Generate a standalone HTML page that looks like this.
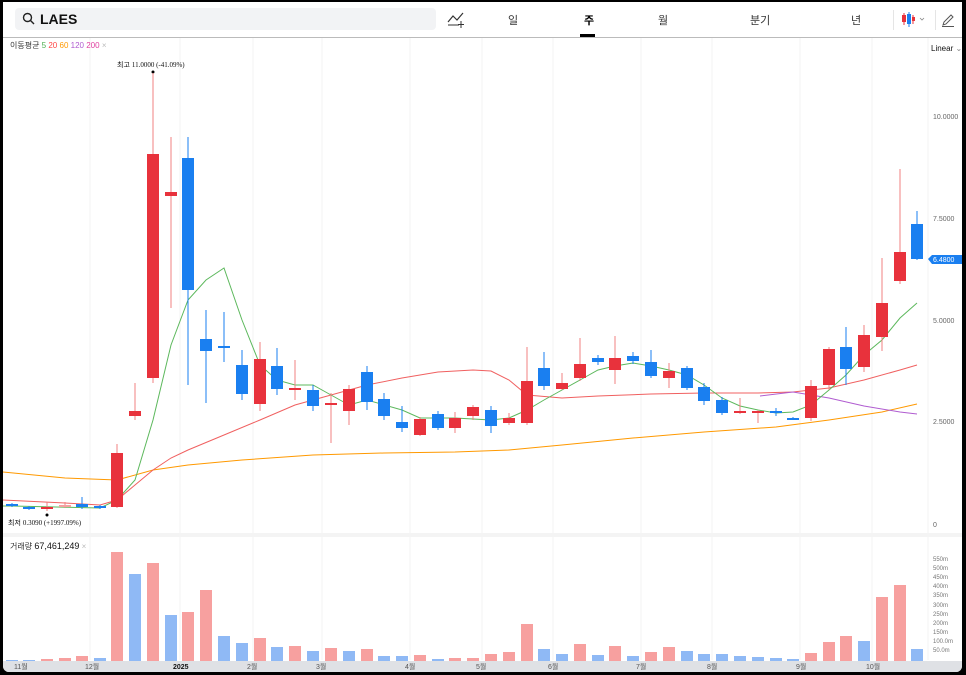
<!DOCTYPE html>
<html><head><meta charset="utf-8">
<style>
*{margin:0;padding:0;box-sizing:border-box}
html,body{width:966px;height:675px;background:#000;overflow:hidden;font-family:"Liberation Sans","Noto Sans CJK KR",sans-serif}
#w{position:absolute;left:3px;top:2px;width:959px;height:670px;background:#fff;border-radius:0 0 6px 6px;overflow:hidden}
#top{position:absolute;left:0;top:0;width:959px;height:36px;border-bottom:1px solid #bbb}
#search{position:absolute;left:12px;top:6px;width:421px;height:22px;background:#f2f3f5;border-radius:4px}
#search span{position:absolute;left:25px;top:3px;font-size:14px;font-weight:bold;color:#111}
.tab{position:absolute;top:10px;font-size:11px;color:#333}
svg{position:absolute;left:0;top:0}
.sm{font-size:7px;fill:#666}
</style></head><body><div id="w">
<div id="top">
<div id="search"><svg width="14" height="14" style="left:7px;top:4px"><circle cx="5.5" cy="5.5" r="4" fill="none" stroke="#222" stroke-width="1.4"/><line x1="8.5" y1="8.5" x2="12" y2="12" stroke="#222" stroke-width="1.4"/></svg><span>LAES</span></div>
<svg width="20" height="20" style="left:443px;top:8px"><polyline points="2,12 7,6 11,10 17,3" fill="none" stroke="#333" stroke-width="1.2"/><line x1="2" y1="15" x2="13" y2="15" stroke="#333"/><line x1="15" y1="11" x2="15" y2="18" stroke="#333"/><line x1="12" y1="14.5" x2="18" y2="14.5" stroke="#333"/></svg>
<div class="tab" style="left:505px">일</div>
<div class="tab" style="left:581px;font-weight:bold;color:#000">주</div>
<div style="position:absolute;left:577px;top:32px;width:15px;height:3px;background:#000"></div>
<div class="tab" style="left:655px">월</div>
<div class="tab" style="left:747px">분기</div>
<div class="tab" style="left:848px">년</div>
<div style="position:absolute;left:890px;top:8px;width:1px;height:20px;background:#e5e5e5"></div>
<div style="position:absolute;left:932px;top:8px;width:1px;height:20px;background:#e5e5e5"></div>
<svg width="30" height="20" style="left:897px;top:8px"><line x1="4" y1="3" x2="4" y2="15" stroke="#e8323c"/><rect x="2" y="5" width="4" height="7" fill="#e8323c"/><line x1="9" y1="2" x2="9" y2="17" stroke="#1a7ff0"/><rect x="7" y="4" width="4" height="10" fill="#1a7ff0"/><line x1="13" y1="5" x2="13" y2="14" stroke="#e8323c"/><rect x="12" y="7" width="3" height="4" fill="#e8323c"/><polyline points="20,8 22,10 24,8" fill="none" stroke="#888" stroke-width="0.8"/></svg>
<svg width="16" height="16" style="left:937px;top:10px"><path d="M3 13 L4 10 L11 3 L13 5 L6 12 Z" fill="none" stroke="#555" stroke-width="1"/><line x1="2" y1="14.5" x2="14" y2="14.5" stroke="#555"/></svg>
</div>
<svg width="959" height="670" viewBox="3 2 959 670" style="top:0;left:0">
<g stroke="#f3f3f3" stroke-width="1">
<line x1="90" y1="38" x2="90" y2="660"/><line x1="180" y1="38" x2="180" y2="660"/><line x1="253" y1="38" x2="253" y2="660"/><line x1="322" y1="38" x2="322" y2="660"/><line x1="410" y1="38" x2="410" y2="660"/><line x1="482" y1="38" x2="482" y2="660"/><line x1="553" y1="38" x2="553" y2="660"/><line x1="641" y1="38" x2="641" y2="660"/><line x1="712" y1="38" x2="712" y2="660"/><line x1="800" y1="38" x2="800" y2="660"/><line x1="872" y1="38" x2="872" y2="660"/><line x1="928" y1="38" x2="928" y2="660"/>
</g>
<rect x="3" y="533" width="959" height="4" fill="#f4f4f4"/>
<text x="10" y="48" font-size="8" fill="#333">이동평균 <tspan fill="#4caf50">5</tspan> <tspan fill="#f44">20</tspan> <tspan fill="#f90">60</tspan> <tspan fill="#b05cd0">120</tspan> <tspan fill="#e040a0">200</tspan> <tspan fill="#bbb">×</tspan></text>
<text x="931" y="51" font-size="8" fill="#111">Linear <tspan fill="#888">⌄</tspan></text>
<text x="933" y="119" class="sm">10.0000</text><text x="933" y="221" class="sm">7.5000</text><text x="933" y="323" class="sm">5.0000</text><text x="933" y="424" class="sm">2.5000</text><text x="933" y="527" class="sm">0</text>
<path d="M928 259 L932 255 L962 255 L962 264 L932 264 Z" fill="#1a7ff0"/><text x="933" y="262" font-size="7" fill="#fff">6.4800</text>
<text x="117" y="67" font-size="7" fill="#111">최고 <tspan font-family="Liberation Serif">11.0000 (-41.09%)</tspan></text><circle cx="153" cy="72" r="1.5" fill="#000"/>
<text x="8" y="525" font-size="7" fill="#111">최저 <tspan font-family="Liberation Serif">0.3090 (+1997.09%)</tspan></text><circle cx="47" cy="515" r="1.5" fill="#000"/>
<g fill="none" stroke-width="1">
<polyline stroke="#f90" points="3,472 65,478 117,480 153,470 188,465 242,460 313,455 384,453 455,452 509,450 562,445 633,438 704,432 776,427 829,420 882,412 917,404"/>
<polyline stroke="#f06060" points="3,500 65,503 100,505 117,500 135,485 153,470 171,458 188,450 224,435 260,420 295,405 331,395 367,385 402,378 438,372 473,370 491,371 509,380 527,395 562,398 598,396 651,394 704,393 758,393 793,392 829,388 864,380 900,370 917,365"/>
<polyline stroke="#b05cd0" points="760,396 793,392 829,398 864,406 900,412 917,414"/>
<polyline stroke="#5cb85c" points="3,506 12,506 100,508 117,500 135,480 153,420 171,345 188,300 206,280 224,268 242,320 260,365 277,380 295,385 313,385 331,395 349,405 367,400 402,410 420,418 455,418 491,420 509,418 527,410 544,400 562,390 580,380 598,370 615,366 633,363 651,366 669,370 687,375 704,385 722,398 740,406 758,410 776,413 793,412 811,405 829,390 846,375 864,355 882,340 900,318 917,303"/>
</g>
<g id="c">
<!-- candles: wick then body -->
<g fill="#1a7ff0" stroke="#1a7ff0">
<line x1="12" y1="503" x2="12" y2="507"/><rect x="6" y="504" width="12" height="2" stroke="none"/>
<line x1="29" y1="506" x2="29" y2="510"/><rect x="23" y="507" width="12" height="2" stroke="none"/>
<line x1="82" y1="497" x2="82" y2="509"/><rect x="76" y="504" width="12" height="3" stroke="none"/>
<line x1="100" y1="505" x2="100" y2="509"/><rect x="94" y="506" width="12" height="2" stroke="none"/>
<line x1="188" y1="137" x2="188" y2="385"/><rect x="182" y="158" width="12" height="132" stroke="none"/>
<line x1="206" y1="310" x2="206" y2="403"/><rect x="200" y="339" width="12" height="12" stroke="none"/>
<line x1="224" y1="312" x2="224" y2="362"/><rect x="218" y="346" width="12" height="2" stroke="none"/>
<line x1="242" y1="350" x2="242" y2="400"/><rect x="236" y="365" width="12" height="29" stroke="none"/>
<line x1="277" y1="348" x2="277" y2="395"/><rect x="271" y="366" width="12" height="23" stroke="none"/>
<line x1="313" y1="385" x2="313" y2="411"/><rect x="307" y="390" width="12" height="16" stroke="none"/>
<line x1="367" y1="366" x2="367" y2="410"/><rect x="361" y="372" width="12" height="30" stroke="none"/>
<line x1="384" y1="393" x2="384" y2="420"/><rect x="378" y="399" width="12" height="17" stroke="none"/>
<line x1="402" y1="406" x2="402" y2="432"/><rect x="396" y="422" width="12" height="6" stroke="none"/>
<line x1="438" y1="411" x2="438" y2="430"/><rect x="432" y="414" width="12" height="14" stroke="none"/>
<line x1="491" y1="406" x2="491" y2="433"/><rect x="485" y="410" width="12" height="16" stroke="none"/>
<line x1="544" y1="352" x2="544" y2="390"/><rect x="538" y="368" width="12" height="18" stroke="none"/>
<line x1="598" y1="355" x2="598" y2="365"/><rect x="592" y="358" width="12" height="4" stroke="none"/>
<line x1="633" y1="352" x2="633" y2="364"/><rect x="627" y="356" width="12" height="5" stroke="none"/>
<line x1="651" y1="350" x2="651" y2="378"/><rect x="645" y="362" width="12" height="14" stroke="none"/>
<line x1="687" y1="366" x2="687" y2="390"/><rect x="681" y="368" width="12" height="20" stroke="none"/>
<line x1="704" y1="383" x2="704" y2="405"/><rect x="698" y="387" width="12" height="14" stroke="none"/>
<line x1="722" y1="397" x2="722" y2="415"/><rect x="716" y="400" width="12" height="13" stroke="none"/>
<line x1="776" y1="408" x2="776" y2="416"/><rect x="770" y="411" width="12" height="2" stroke="none"/>
<line x1="793" y1="417" x2="793" y2="420"/><rect x="787" y="418" width="12" height="2" stroke="none"/>
<line x1="846" y1="327" x2="846" y2="385"/><rect x="840" y="347" width="12" height="22" stroke="none"/>
<line x1="917" y1="211" x2="917" y2="260"/><rect x="911" y="224" width="12" height="35" stroke="none"/>
</g>
<g fill="#e8323c" stroke="#f08080">
<line x1="47" y1="502" x2="47" y2="511"/><rect x="41" y="507" width="12" height="2" stroke="none"/>
<line x1="65" y1="502" x2="65" y2="508"/><rect x="59" y="505" width="12" height="2" stroke="none" fill="#f5a0a0"/>
<line x1="117" y1="444" x2="117" y2="508"/><rect x="111" y="453" width="12" height="54" stroke="none"/>
<line x1="135" y1="383" x2="135" y2="420"/><rect x="129" y="411" width="12" height="5" stroke="none"/>
<line x1="153" y1="73" x2="153" y2="383"/><rect x="147" y="154" width="12" height="224" stroke="none"/>
<line x1="171" y1="137" x2="171" y2="308"/><rect x="165" y="192" width="12" height="4" stroke="none"/>
<line x1="260" y1="342" x2="260" y2="411"/><rect x="254" y="359" width="12" height="45" stroke="none"/>
<line x1="295" y1="360" x2="295" y2="400"/><rect x="289" y="388" width="12" height="2" stroke="none"/>
<line x1="331" y1="393" x2="331" y2="443"/><rect x="325" y="403" width="12" height="2" stroke="none"/>
<line x1="349" y1="385" x2="349" y2="425"/><rect x="343" y="389" width="12" height="22" stroke="none"/>
<line x1="420" y1="417" x2="420" y2="436"/><rect x="414" y="419" width="12" height="16" stroke="none"/>
<line x1="455" y1="412" x2="455" y2="433"/><rect x="449" y="418" width="12" height="10" stroke="none"/>
<line x1="473" y1="405" x2="473" y2="420"/><rect x="467" y="407" width="12" height="9" stroke="none"/>
<line x1="509" y1="413" x2="509" y2="425"/><rect x="503" y="418" width="12" height="5" stroke="none"/>
<line x1="527" y1="347" x2="527" y2="425"/><rect x="521" y="381" width="12" height="42" stroke="none"/>
<line x1="562" y1="373" x2="562" y2="390"/><rect x="556" y="383" width="12" height="6" stroke="none"/>
<line x1="580" y1="338" x2="580" y2="381"/><rect x="574" y="364" width="12" height="14" stroke="none"/>
<line x1="615" y1="336" x2="615" y2="384"/><rect x="609" y="358" width="12" height="12" stroke="none"/>
<line x1="669" y1="363" x2="669" y2="388"/><rect x="663" y="371" width="12" height="7" stroke="none"/>
<line x1="740" y1="398" x2="740" y2="414"/><rect x="734" y="411" width="12" height="2" stroke="none"/>
<line x1="758" y1="410" x2="758" y2="423"/><rect x="752" y="411" width="12" height="2" stroke="none"/>
<line x1="811" y1="380" x2="811" y2="421"/><rect x="805" y="386" width="12" height="32" stroke="none"/>
<line x1="829" y1="347" x2="829" y2="390"/><rect x="823" y="349" width="12" height="36" stroke="none"/>
<line x1="864" y1="325" x2="864" y2="372"/><rect x="858" y="335" width="12" height="32" stroke="none"/>
<line x1="882" y1="258" x2="882" y2="351"/><rect x="876" y="303" width="12" height="34" stroke="none"/>
<line x1="900" y1="169" x2="900" y2="284"/><rect x="894" y="252" width="12" height="29" stroke="none"/>
</g>
</g>
<text x="10" y="549" font-size="8" fill="#333">거래량 <tspan fill="#111" font-size="9">67,461,249</tspan> <tspan fill="#bbb">×</tspan></text>
<g font-size="6" fill="#777">
<text x="933" y="561">550m</text><text x="933" y="570">500m</text><text x="933" y="579">450m</text><text x="933" y="588">400m</text><text x="933" y="597">350m</text><text x="933" y="607">300m</text><text x="933" y="616">250m</text><text x="933" y="625">200m</text><text x="933" y="634">150m</text><text x="933" y="643">100.0m</text><text x="933" y="652">50.0m</text>
</g>
<g fill="#f7a09f">
<rect x="41" y="659" width="12" height="2"/><rect x="59" y="658" width="12" height="3"/><rect x="76" y="656" width="12" height="5"/>
<rect x="111" y="552" width="12" height="109"/><rect x="147" y="563" width="12" height="98"/><rect x="182" y="612" width="12" height="49"/><rect x="200" y="590" width="12" height="71"/>
<rect x="254" y="638" width="12" height="23"/><rect x="289" y="646" width="12" height="15"/><rect x="325" y="648" width="12" height="13"/><rect x="361" y="649" width="12" height="12"/>
<rect x="414" y="655" width="12" height="6"/><rect x="449" y="658" width="12" height="3"/><rect x="467" y="658" width="12" height="3"/><rect x="485" y="654" width="12" height="7"/><rect x="503" y="652" width="12" height="9"/><rect x="521" y="624" width="12" height="37"/>
<rect x="574" y="644" width="12" height="17"/><rect x="609" y="646" width="12" height="15"/><rect x="645" y="652" width="12" height="9"/><rect x="663" y="647" width="12" height="14"/>
<rect x="805" y="653" width="12" height="8"/><rect x="823" y="642" width="12" height="19"/><rect x="840" y="636" width="12" height="25"/><rect x="876" y="597" width="12" height="64"/><rect x="894" y="585" width="12" height="76"/>
</g>
<g fill="#8fb9f5">
<rect x="6" y="660" width="12" height="1"/><rect x="23" y="660" width="12" height="1"/><rect x="94" y="658" width="12" height="3"/>
<rect x="129" y="574" width="12" height="87"/><rect x="165" y="615" width="12" height="46"/><rect x="218" y="636" width="12" height="25"/><rect x="236" y="643" width="12" height="18"/><rect x="271" y="647" width="12" height="14"/><rect x="307" y="651" width="12" height="10"/><rect x="343" y="651" width="12" height="10"/>
<rect x="378" y="656" width="12" height="5"/><rect x="396" y="656" width="12" height="5"/><rect x="432" y="659" width="12" height="2"/>
<rect x="538" y="649" width="12" height="12"/><rect x="556" y="654" width="12" height="7"/><rect x="592" y="655" width="12" height="6"/><rect x="627" y="656" width="12" height="5"/>
<rect x="681" y="651" width="12" height="10"/><rect x="698" y="654" width="12" height="7"/><rect x="716" y="654" width="12" height="7"/><rect x="734" y="656" width="12" height="5"/><rect x="752" y="657" width="12" height="4"/><rect x="770" y="658" width="12" height="3"/><rect x="787" y="659" width="12" height="2"/>
<rect x="858" y="641" width="12" height="20"/><rect x="911" y="649" width="12" height="12"/>
</g>
<rect x="3" y="661" width="959" height="11" fill="#dfe1e5"/>
<g font-size="7" fill="#555">
<text x="14" y="669">11월</text><text x="85" y="669">12월</text><text x="173" y="669" fill="#111" font-weight="bold">2025</text><text x="247" y="669">2월</text><text x="316" y="669">3월</text><text x="405" y="669">4월</text><text x="476" y="669">5월</text><text x="548" y="669">6월</text><text x="636" y="669">7월</text><text x="707" y="669">8월</text><text x="796" y="669">9월</text><text x="866" y="669">10월</text>
</g>
</svg>
</div></body></html>
